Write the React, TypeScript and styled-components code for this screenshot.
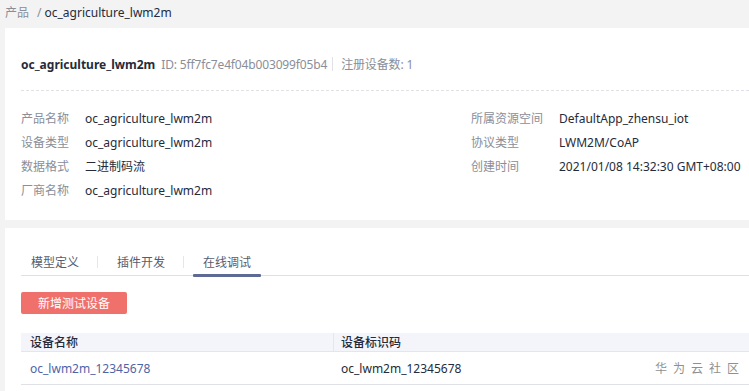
import React from "react";
import styled, { createGlobalStyle } from "styled-components";

const Global = createGlobalStyle`
  html, body { margin: 0; padding: 0; background: #f3f3f3; }
  body { font-family: "Noto Sans", "Noto Sans CJK SC", sans-serif; font-size: 12px; color: #252b3a; }
  * { box-sizing: border-box; }
`;

const Page = styled.div`
  width: 749px;
  height: 391px;
  overflow: hidden;
  padding-left: 5px;
  display: flex;
  flex-direction: column;
`;

const Breadcrumb = styled.div`
  height: 28px;
  display: flex;
  align-items: center;
  padding-bottom: 4px;
  font-size: 12px;
`;
const Crumb = styled.span<{ $current?: boolean }>`
  color: ${(p) => (p.$current ? "#252b3a" : "#8a8e99")};
`;
const CrumbSep = styled.span`
  color: #8a8e99;
  margin: 0 3px 0 8px;
`;

const Card = styled.div`
  background: #fff;
  padding: 0 0 0 16px;
`;

const InfoCard = styled(Card)`
  height: 192px;
  margin-bottom: 8px;
`;

const TitleRow = styled.div`
  display: flex;
  align-items: center;
  height: 63px;
  padding-top: 10px;
  border-bottom: 1px dashed #dfe1e6;
`;
const Title = styled.span`
  font-size: 12px;
  font-weight: 700;
  color: #252b3a;
  margin-right: 6px;
`;
const Meta = styled.span`
  color: #8a8e99;
  font-size: 12px;
  letter-spacing: -0.15px;
`;
const VSep = styled.span`
  width: 1px;
  height: 14px;
  background: #dfe1e6;
  margin: 0 8px 0 5px;
`;

const InfoGrid = styled.div`
  display: grid;
  grid-template-columns: 450px 1fr;
  padding-top: 15px;
`;
const Col = styled.div`
  display: flex;
  flex-direction: column;
`;
const InfoRow = styled.div`
  display: flex;
  height: 24px;
  align-items: center;
`;
const Label = styled.span<{ $w: number }>`
  width: ${(p) => p.$w}px;
  color: #8a8e99;
  flex-shrink: 0;
`;
const Value = styled.span`
  color: #252b3a;
  white-space: nowrap;
`;

const BottomCard = styled(Card)`
  flex: 1;
  padding-top: 21px;
`;

const Tabs = styled.div`
  display: flex;
  align-items: stretch;
  height: 27px;
  border-bottom: 1px solid #dfe1e6;
`;
const Tab = styled.div<{ $active?: boolean }>`
  position: relative;
  display: flex;
  align-items: center;
  padding: 0 10px;
  color: #575d6c;
  font-size: 12px;
  ${(p) =>
    p.$active &&
    `&:after { content: ""; position: absolute; left: 0; right: 0; bottom: -2px; height: 3px; background: #5e6a94; border-radius: 1px; }`}
`;
const TabSep = styled.span`
  align-self: center;
  width: 1px;
  height: 12px;
  background: #e5e6ea;
  margin: 0 9px 0 8px;
`;

const AddButton = styled.button`
  margin-top: 16px;
  width: 106px;
  height: 22px;
  border: none;
  border-radius: 2px;
  background: #f0706b;
  color: #fff;
  font-family: inherit;
  font-size: 12px;
  padding: 0;
`;

const Table = styled.div`
  margin-top: 19px;
  display: grid;
  grid-template-columns: 312px 1fr;
`;
const Th = styled.div<{ $sep?: boolean }>`
  height: 19px;
  background: #f3f5fa;
  display: flex;
  align-items: center;
  padding-left: 9px;
  font-weight: 500;
  color: #252b3a;
  border-bottom: 1px solid #e3e6ec;
  ${(p) => p.$sep && "border-left: 1px solid #e3e6ec; padding-left: 7px;"}
`;
const Td = styled.div<{ $link?: boolean; $sep?: boolean }>`
  height: 33px;
  display: flex;
  align-items: center;
  justify-content: space-between;
  padding-left: ${(p) => (p.$sep ? "8px" : "9px")};
  border-bottom: 1px solid #dfe1e6;
  color: ${(p) => (p.$link ? "#4f64a6" : "#252b3a")};
`;
const Watermark = styled.span`
  color: #8f8f8f;
  letter-spacing: 6px;
  font-size: 12px;
  margin-right: 4px;
`;

export default function App() {
  return (
    <>
      <Global />
      <Page>
        <Breadcrumb>
          <Crumb>产品</Crumb>
          <CrumbSep>/</CrumbSep>
          <Crumb $current>oc_agriculture_lwm2m</Crumb>
        </Breadcrumb>
        <InfoCard>
          <TitleRow>
            <Title>oc_agriculture_lwm2m</Title>
            <Meta>ID: 5ff7fc7e4f04b003099f05b4</Meta>
            <VSep />
            <Meta>注册设备数: 1</Meta>
          </TitleRow>
          <InfoGrid>
            <Col>
              <InfoRow><Label $w={64}>产品名称</Label><Value>oc_agriculture_lwm2m</Value></InfoRow>
              <InfoRow><Label $w={64}>设备类型</Label><Value>oc_agriculture_lwm2m</Value></InfoRow>
              <InfoRow><Label $w={64}>数据格式</Label><Value>二进制码流</Value></InfoRow>
              <InfoRow><Label $w={64}>厂商名称</Label><Value>oc_agriculture_lwm2m</Value></InfoRow>
            </Col>
            <Col>
              <InfoRow><Label $w={88}>所属资源空间</Label><Value>DefaultApp_zhensu_iot</Value></InfoRow>
              <InfoRow><Label $w={88}>协议类型</Label><Value>LWM2M/CoAP</Value></InfoRow>
              <InfoRow><Label $w={88}>创建时间</Label><Value>2021/01/08 14:32:30 GMT+08:00</Value></InfoRow>
            </Col>
          </InfoGrid>
        </InfoCard>
        <BottomCard>
          <Tabs>
            <Tab>模型定义</Tab>
            <TabSep />
            <Tab>插件开发</Tab>
            <TabSep />
            <Tab $active>在线调试</Tab>
          </Tabs>
          <AddButton>新增测试设备</AddButton>
          <Table>
            <Th>设备名称</Th>
            <Th $sep>设备标识码</Th>
            <Td $link>oc_lwm2m_12345678</Td>
            <Td $sep>
              <span>oc_lwm2m_12345678</span>
              <Watermark>华为云社区</Watermark>
            </Td>
          </Table>
        </BottomCard>
      </Page>
    </>
  );
}
